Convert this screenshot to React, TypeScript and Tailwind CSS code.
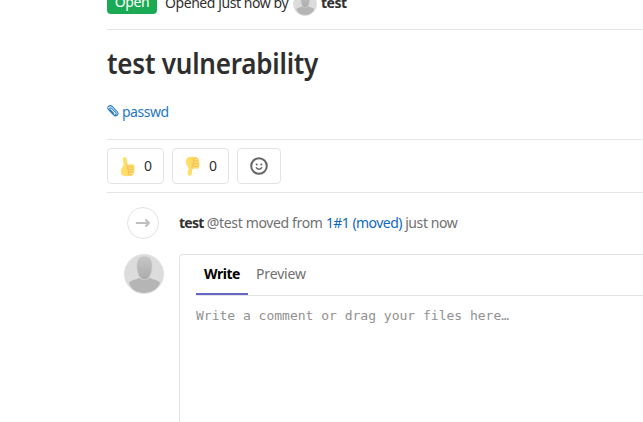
import React from "react";

function Avatar({ className }: { className: string }) {
  return (
    <span className={`block shrink-0 overflow-hidden rounded-full border border-[#e0e0e0] bg-[#dcdcdc] ${className}`}>
      <svg viewBox="0 0 40 40" className="block h-full w-full">
        <defs>
          <linearGradient id="person" x1="0" y1="0" x2="0" y2="1">
            <stop offset="0" stopColor="#c6c6c6" />
            <stop offset="1" stopColor="#ababab" />
          </linearGradient>
        </defs>
        <path d="M4 29C8 26 12 26 15 24C18 27 23 27 26 24C29 26 33 26 37 29C34 37 27 41 20 41S7 37 4 29Z" fill="#b5b5b5" />
        <path d="M20.500 1.500C26 1.500 28.500 5 28.500 11C28.500 19 25.500 26 20.500 26S12.500 19 12.500 11C12.500 5 15 1.500 20.500 1.500Z" fill="url(#person)" stroke="#d2d2d2" strokeWidth=".6" />
      </svg>
    </span>
  );
}

function Thumb({ down = false }: { down?: boolean }) {
  return (
    <svg viewBox="0 0 16 20" className={`block h-5 w-4 shrink-0 ${down ? "-scale-y-100" : "mt-0.5"}`}>
      <path d="M4 .3C5.900-.2 6.800 1.200 6.900 3L7.400 7.400L12.500 7.200C14 7.300 14.500 8.500 13.900 9.500C15 10.300 14.900 11.800 14 12.400C14.800 13.400 14.500 14.700 13.600 15.200C14.100 16.400 13.500 17.700 12.400 18.100C9.600 19.500 5.400 19.500 3 18.600C1 17.900.9 15.300 1.100 12.700C1.200 10.700 3.700 9 3.600 7.300L2.700 2.500Q2.600.8 4 .3Z" fill="#ffdd67" />
      <path d="M13.900 9.700H9Q7.300 9.700 7.300 11T9 12.300H14M8.500 12.400Q7.400 13.600 8.600 15H13.600M8.600 15.100Q7.600 17.500 9.500 18H12.400M7.400 7.400Q7.500 9 6.500 9.700" fill="none" stroke="#f0b45a" strokeWidth=".8" />
    </svg>
  );
}

function Reaction({ down = false }: { down?: boolean }) {
  return (
    <button className="flex h-9 w-[57px] items-center gap-2 rounded border border-[#e3e3e3] bg-white pl-3 text-[#303030]">
      <Thumb down={down} />
      <span>0</span>
    </button>
  );
}

export default function App() {
  return (
    <div className="h-[422px] w-full overflow-hidden bg-white pl-[107px] font-['Noto_Sans',sans-serif] text-sm leading-5 text-[#303030]">
      <header className="flex h-[30px] items-start border-b border-[#e5e5e5]">
        <span className="-mt-2.5 flex h-6 w-[50px] items-center justify-center rounded bg-[#1aaa55] tracking-[-0.4px] text-white">Open</span>
        <span className="-mt-[7px] ml-2 w-[123px] whitespace-nowrap tracking-[-0.43px]">Opened just now by</span>
        <Avatar className="-mt-2 ml-[5px] h-6 w-6" />
        <strong className="-mt-[7px] ml-1 font-bold tracking-[-0.5px]">test</strong>
      </header>

      <h1 className="h-[72px] origin-left scale-x-[0.93] pt-[15px] text-[28px] leading-9 font-semibold tracking-[-0.25px] text-[#2e2e2e]">test vulnerability</h1>
      <div className="flex h-[37px] items-start text-[#1f78c4]">
        <svg viewBox="0 0 14 14" className="mt-[3px] mr-[3px] h-3 w-3 shrink-0" fill="none" stroke="currentColor" strokeWidth="1.200">
          <path d="M2.600 6.300L8 11.700C10.700 14.300 14.700 10.800 12 7.900L6 1.700C3.300-.9-.9 2.700 1.800 5.500L7.600 11.200C9.400 13 12 10.500 10.200 8.700L5.300 3.800C4 2.500 2.300 4.200 3.600 5.500L8.200 10.100" />
        </svg>
        <a className="tracking-[-0.5px]">passwd</a>
      </div>

      <section className="flex h-[54px] items-start gap-2 border-y border-[#e5e5e5] pt-2">
        <Reaction />
        <Reaction down />
        <button className="flex h-9 w-11 items-center justify-center rounded border border-[#e3e3e3]">
          <svg viewBox="0 0 18 18" className="h-[18px] w-[18px]" fill="none" stroke="#666" strokeWidth="2">
            <circle cx="9" cy="9" r="7.800" />
            <path d="M6 10.300Q6.800 12.200 9 12.200T12 10.300" strokeWidth="1.400" />
            <circle cx="6.700" cy="7.400" r="1" fill="#666" stroke="none" />
            <circle cx="11.300" cy="7.400" r="1" fill="#666" stroke="none" />
          </svg>
        </button>
      </section>

      <div className="flex h-[61px] items-start pt-3.5 pl-5">
        <span className="flex h-8 w-8 shrink-0 items-center justify-center rounded-full border border-[#e3e3e3]">
          <svg viewBox="0 0 16 16" className="h-4 w-4" fill="none" stroke="#bfbfbf" strokeWidth="2" strokeLinecap="round" strokeLinejoin="round">
            <path d="M1.700 8H14M11 5L14 8L11 11" />
          </svg>
        </span>
        <p className="mt-1.5 ml-5 whitespace-nowrap tracking-[-0.35px] text-[#707070]">
          <strong className="font-bold tracking-[-0.75px] text-[#303030]">test</strong> @test moved from <a className="tracking-[-0.55px] text-[#1068bf]">1#1 (moved)</a> <span className="tracking-[-0.4px]">just now</span>
        </p>
      </div>

      <section className="flex pl-[17px]">
        <Avatar className="h-10 w-10" />
        <div className="ml-[15px] h-[180px] flex-1 rounded-tl border-t border-l border-[#e3e3e3] pl-4">
          <nav className="flex h-[41px] border-b border-[#e3e3e3]">
            <span className="h-10 w-[52px] border-b-2 border-[#6666c4] pt-[9px] text-center font-bold tracking-[-0.5px] text-black">Write</span>
            <span className="ml-2 pt-[9px] tracking-[-0.15px] text-[#707070]">Preview</span>
          </nav>
          <textarea
            className="mt-2.5 block h-28 w-full resize-none font-['DejaVu_Sans_Mono',monospace] text-[13px] leading-5 outline-none placeholder:text-[#919191]"
            placeholder="Write a comment or drag your files here…"
          />
        </div>
      </section>
    </div>
  );
}
